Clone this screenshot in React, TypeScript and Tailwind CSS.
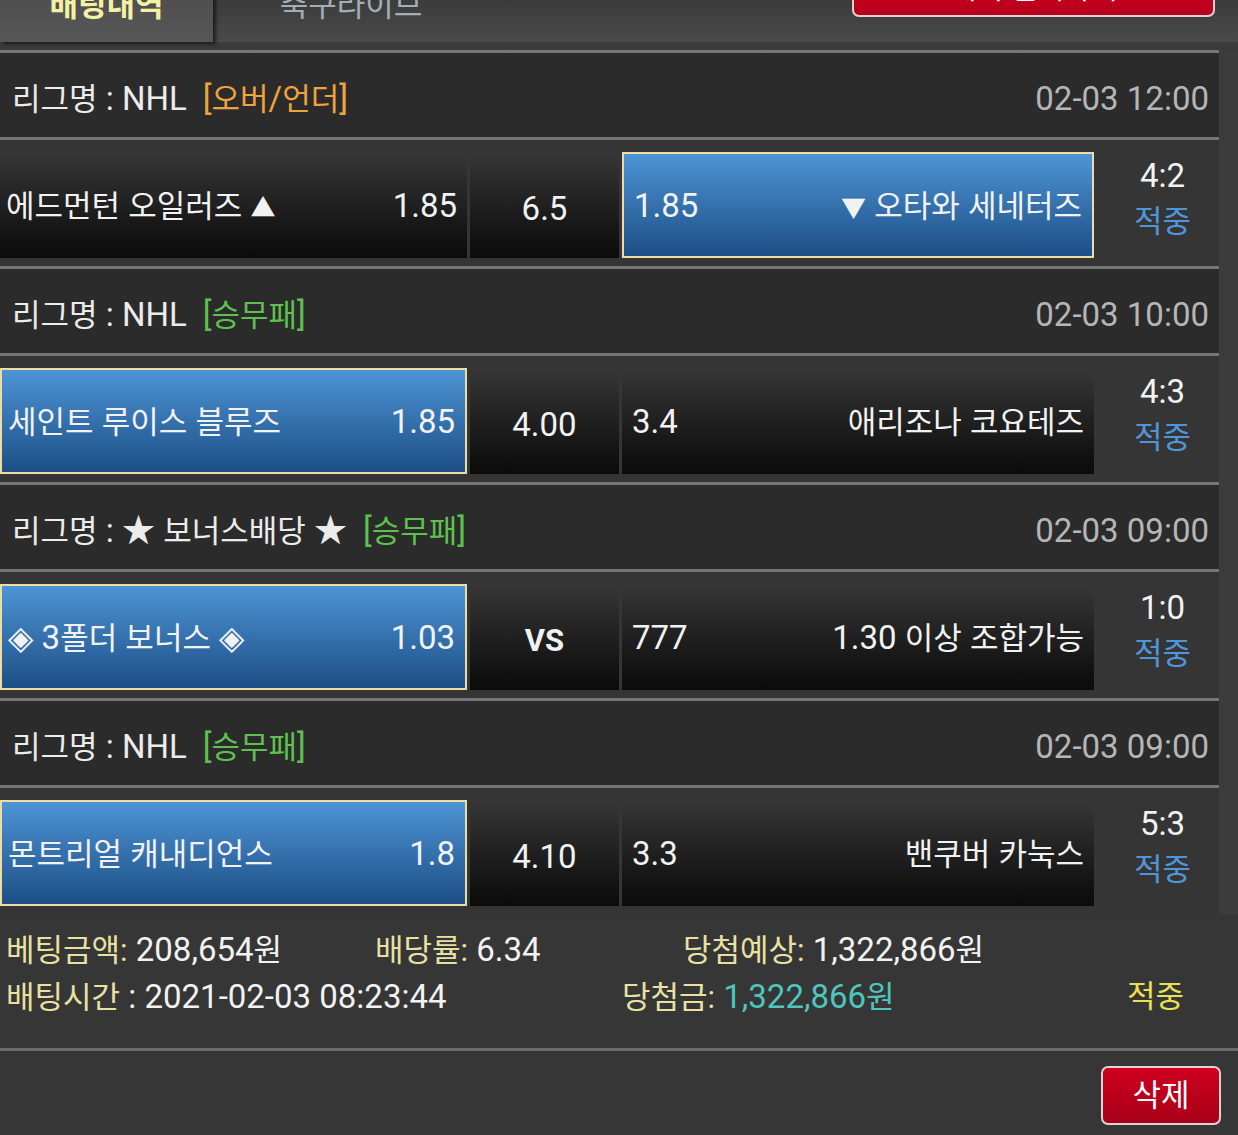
import React from "react";

type Game = {
  league: string;
  type: string;
  typeColor: string;
  date: string;
  home: string;
  homeOdds: string;
  mid: string;
  midBold?: boolean;
  awayOdds: string;
  away: string;
  pick: "home" | "away";
  score: string;
};

const games: Game[] = [
  {
    league: "NHL",
    type: "[오버/언더]",
    typeColor: "text-[#f0a23c]",
    date: "02-03 12:00",
    home: "에드먼턴 오일러즈 ▲",
    homeOdds: "1.85",
    mid: "6.5",
    awayOdds: "1.85",
    away: "▼ 오타와 세네터즈",
    pick: "away",
    score: "4:2",
  },
  {
    league: "NHL",
    type: "[승무패]",
    typeColor: "text-[#5ec04e]",
    date: "02-03 10:00",
    home: "세인트 루이스 블루즈",
    homeOdds: "1.85",
    mid: "4.00",
    awayOdds: "3.4",
    away: "애리조나 코요테즈",
    pick: "home",
    score: "4:3",
  },
  {
    league: "★ 보너스배당 ★",
    type: "[승무패]",
    typeColor: "text-[#5ec04e]",
    date: "02-03 09:00",
    home: "◈ 3폴더 보너스 ◈",
    homeOdds: "1.03",
    mid: "VS",
    midBold: true,
    awayOdds: "777",
    away: "1.30 이상 조합가능",
    pick: "home",
    score: "1:0",
  },
  {
    league: "NHL",
    type: "[승무패]",
    typeColor: "text-[#5ec04e]",
    date: "02-03 09:00",
    home: "몬트리얼 캐내디언스",
    homeOdds: "1.8",
    mid: "4.10",
    awayOdds: "3.3",
    away: "밴쿠버 카눅스",
    pick: "home",
    score: "5:3",
  },
];

// hangul is drawn a bit smaller than latin in the original, arrows too
const T = ({ s }: { s: string }) => (
  <>
    {s.split(/([\uAC00-\uD7A3]+|[▲▼])/).map((p, i) =>
      /[\uAC00-\uD7A3]/.test(p) ? (
        <span key={i} className="text-[31px]">
          {p}
        </span>
      ) : /[▲▼]/.test(p) ? (
        <span key={i} className="text-[25px]">
          {p}
        </span>
      ) : (
        <React.Fragment key={i}>{p}</React.Fragment>
      )
    )}
  </>
);

const cellBase = "h-full flex items-center justify-between whitespace-pre";
const darkCell = "bg-gradient-to-b from-[#373737] to-[#0b0b0b]";
const blueCell = "bg-gradient-to-b from-[#4e95d6] to-[#1d4f86] border-2 border-[#ecdca6]";

const GameBlock = ({ g }: { g: Game }) => (
  <div>
    <div className="h-[87px] bg-[#2b2b2b] flex items-center justify-between pl-[12px] pr-[10px] pt-[6px] border-t-[3px] border-[#767676]">
      <div className="flex items-center text-[#ececec]">
        <span>
          <T s={`리그명 : ${g.league}`} />
        </span>
        <span className={`ml-[16px] ${g.typeColor}`}>
          <T s={g.type} />
        </span>
      </div>
      <span className="text-[#b6b6b6]">{g.date}</span>
    </div>
    <div className="h-[129px] bg-[#353535] border-t-[3px] border-[#767676] pt-[12px] pb-[8px] flex">
      <div className={`w-[467px] pl-[6px] pr-[10px] ${cellBase} ${g.pick === "home" ? blueCell : darkCell}`}>
        <span>
          <T s={g.home} />
        </span>
        <span>{g.homeOdds}</span>
      </div>
      <div className={`w-[149px] ml-[3px] h-full flex items-center justify-center pt-[6px] ${darkCell}`}>
        <span className={g.midBold ? "font-bold text-[31px]" : ""}>{g.mid}</span>
      </div>
      <div className={`w-[472px] ml-[3px] px-[10px] ${cellBase} ${g.pick === "away" ? blueCell : darkCell}`}>
        <span>{g.awayOdds}</span>
        <span>
          <T s={g.away} />
        </span>
      </div>
      <div className="flex-1 flex flex-col items-center justify-center pl-[12px] pb-[12px] leading-[46px]">
        <span className="text-[#f2f2f2]">{g.score}</span>
        <span className="text-[31px] text-[#4f97da]">적중</span>
      </div>
    </div>
  </div>
);

export default function App() {
  return (
    <div
      className="w-[1238px] h-[1135px] overflow-hidden bg-[#363636] text-[33px] text-[#f2f2f2] leading-none"
      style={{ fontFamily: "Roboto, 'Noto Sans CJK KR', 'DejaVu Sans', sans-serif" }}
    >
      {/* tab bar, page is scrolled a little so the top is cut */}
      <div className="-mt-[20px] h-[62px] flex items-start bg-gradient-to-b from-[#343434] to-[#4b4b4b]">
        <div className="w-[213px] h-full bg-gradient-to-b from-[#4c4c4c] to-[#575757] shadow-[3px_2px_3px_rgba(0,0,0,0.55)] flex justify-center">
          <span className="leading-[52px] font-bold text-[31px] text-[#f3f1a4]">배팅내역</span>
        </div>
        <div className="w-[276px] flex justify-center">
          <span className="leading-[52px] text-[31px] text-[#a4acb4]">축구라이브</span>
        </div>
        <div className="ml-auto mr-[23px] w-[363px] h-[37px] rounded-[7px] border-2 border-[#e6cfd2] bg-gradient-to-b from-[#d4001f] to-[#b5001a] flex justify-center">
          <span className="leading-[14px] text-[29px] text-white">내역 전체삭제</span>
        </div>
      </div>
      <div className="h-[8px] bg-gradient-to-b from-[#3e3e3e] to-[#383838]" />

      <div className="flex">
        <div className="w-[1219px]">
          {games.map((g, i) => (
            <GameBlock key={i} g={g} />
          ))}
        </div>
        <div className="flex-1 bg-[#3c3c3c]" />
      </div>

      {/* summary */}
      <div className="pt-[13px] pb-[27px] pl-[6px] leading-[46px]">
        <div className="flex">
          <span className="w-[369px]">
            <span className="text-[31px] text-[#e8e1a2]">베팅금액:</span> 208,654<span className="text-[31px]">원</span>
          </span>
          <span className="w-[308px]">
            <span className="text-[31px] text-[#e8e1a2]">배당률:</span> 6.34
          </span>
          <span>
            <span className="text-[31px] text-[#e8e1a2]">당첨예상:</span> 1,322,866<span className="text-[31px]">원</span>
          </span>
        </div>
        <div className="flex">
          <span className="w-[616px]">
            <span className="text-[31px] text-[#e8e1a2]">배팅시간</span> : 2021-02-03 08:23:44
          </span>
          <span className="w-[505px]">
            <span className="text-[31px] text-[#e8e1a2]">당첨금:</span>{" "}
            <span className="text-[#4ec6be]">
              1,322,866<span className="text-[31px]">원</span>
            </span>
          </span>
          <span className="text-[31px] text-[#e9e052]">적중</span>
        </div>
      </div>

      <div className="border-t-[3px] border-[#6c6c6c] flex justify-end pt-[15px] pr-[17px]">
        <button className="w-[120px] h-[59px] rounded-[7px] border-2 border-[#e4d2d4] bg-gradient-to-b from-[#cf001f] to-[#a80018] text-[31px] text-white flex items-center justify-center">
          삭제
        </button>
      </div>
    </div>
  );
}
